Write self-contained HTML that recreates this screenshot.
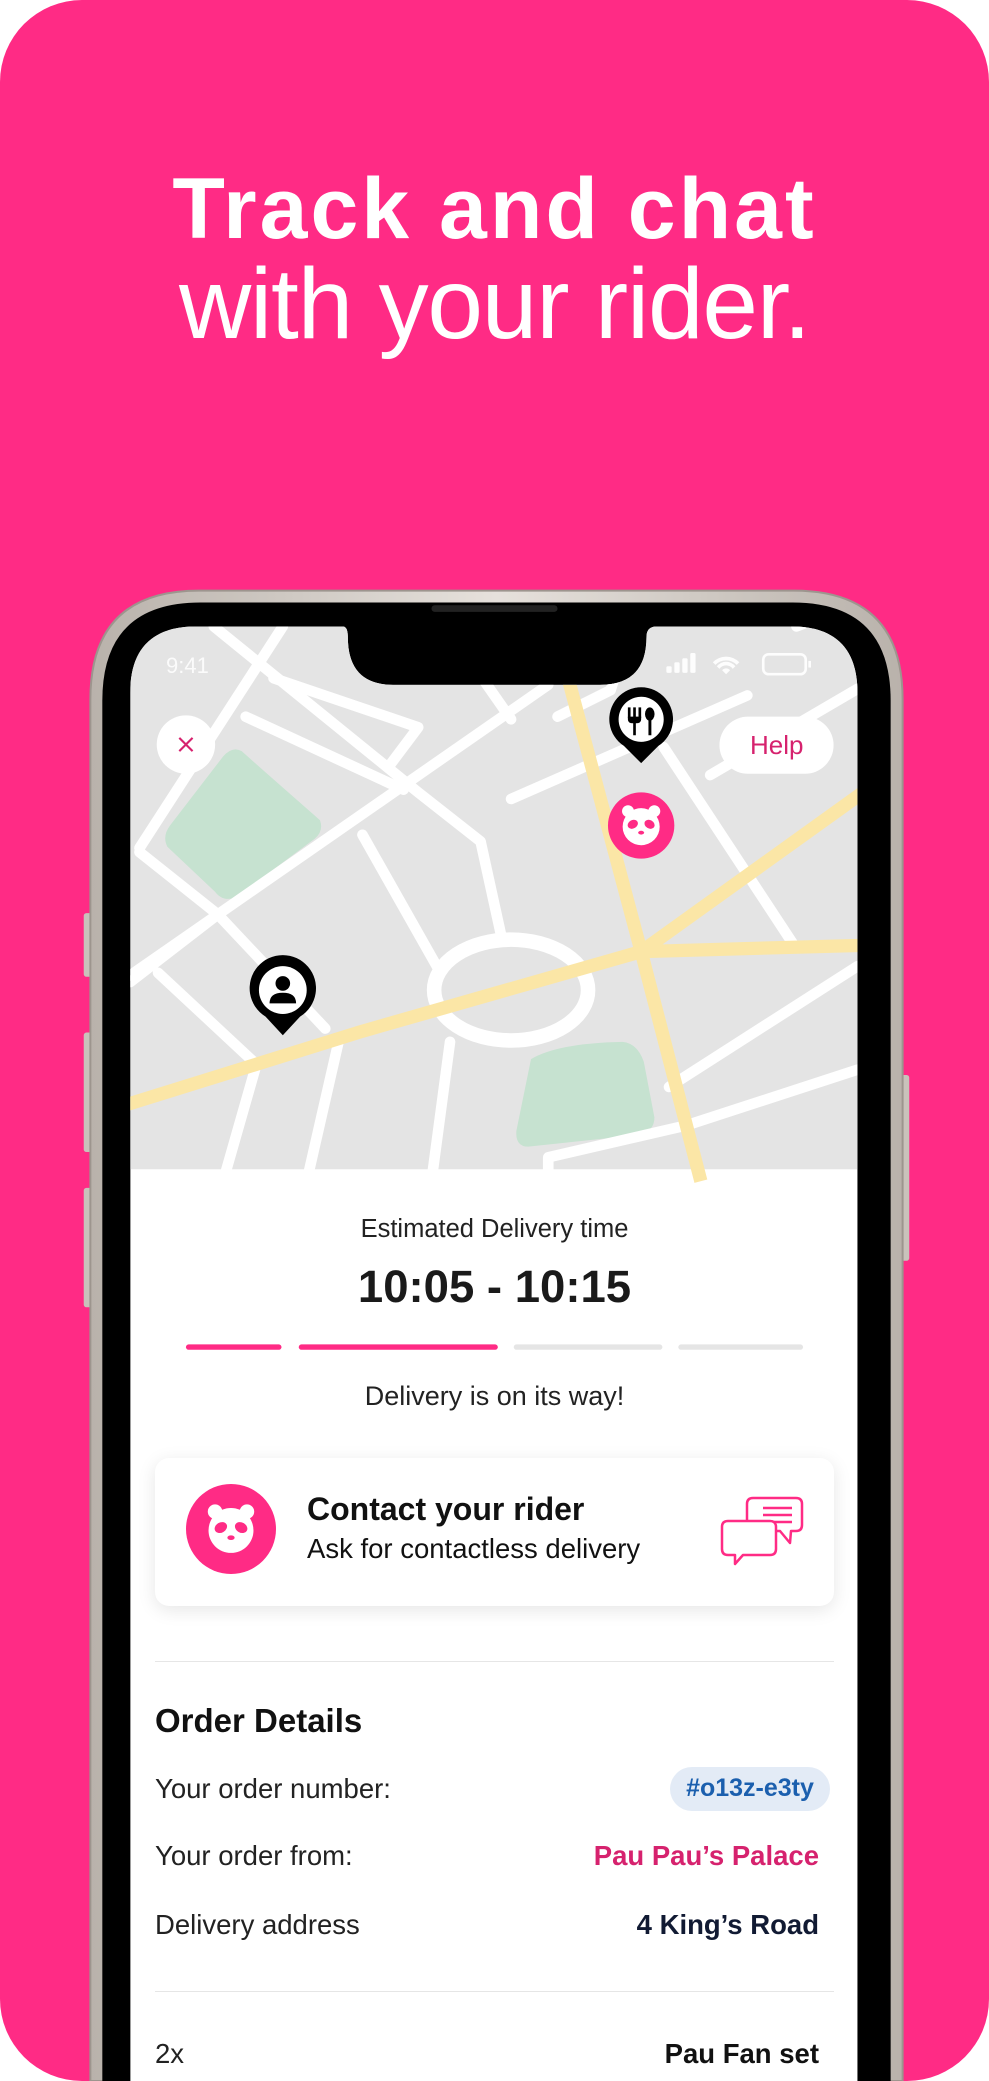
<!DOCTYPE html>
<html><head><meta charset="utf-8">
<style>
*{margin:0;padding:0;box-sizing:border-box}
html,body{width:989px;height:2081px;background:#fff;overflow:hidden}
#wrap{position:absolute;left:0;top:0;width:989px;height:2081px;background:#FF2B85;border-radius:82px;overflow:hidden;font-family:"Liberation Sans",sans-serif}
svg{position:absolute;left:0;top:0}
.t{position:absolute;white-space:nowrap}
</style></head><body>
<div id="wrap">
<div class="t" style="left:0;width:989px;text-align:center;top:159px;font-size:86px;font-weight:700;color:#fff;letter-spacing:3px;line-height:100px">Track and chat</div>
<div class="t" style="left:0;width:989px;text-align:center;top:254px;font-size:100px;font-weight:400;color:#fff;letter-spacing:-1.2px;line-height:100px">with your rider.</div>

<svg width="989" height="2081" viewBox="0 0 745 1568">
<defs>
<clipPath id="scr"><path d="M98,1568 V522 Q98,472 148,472 H258 Q262,472 262,480 Q262,516 296,516 H452 Q487,516 487,480 Q487,472 495,472 H596 Q646,472 646,522 V1568 Z"/></clipPath>
<linearGradient id="fr" x1="0" x2="1"><stop offset="0" stop-color="#b9b2ab"/><stop offset="0.5" stop-color="#e6e1dc"/><stop offset="1" stop-color="#b9b2ab"/></linearGradient>
</defs>
<rect x="63" y="688" width="8" height="48" rx="2" fill="#c9c2bb"/>
<rect x="63" y="778" width="8" height="90" rx="2" fill="#c9c2bb"/>
<rect x="63" y="895" width="8" height="90" rx="2" fill="#c9c2bb"/>
<rect x="677" y="810" width="8" height="140" rx="2" fill="#c9c2bb"/>
<path d="M68,1568 V527 Q68,445 150,445 H598 Q680,445 680,527 V1568 Z" fill="url(#fr)" stroke="#9d958e" stroke-width="1.5"/>
<path d="M77,1568 V528 Q77,454 151,454 H597 Q671,454 671,528 V1568 Z" fill="#000"/>
<rect x="325" y="456" width="95" height="5" rx="2.5" fill="#222"/>
<g clip-path="url(#scr)">
<rect x="98" y="472" width="548" height="1096" fill="#fff"/>
<rect x="98" y="472" width="548" height="409" fill="#e4e4e4"/>
<path d="M182,566 Q192,575 241,618 Q244,626 237,632 L178,676 Q168,680 162,672 L126,638 Q122,630 128,622 L168,570 Q175,562 182,566Z" fill="#c6e2d0"/>
<path d="M400,798 Q420,786 469,785 Q480,786 485,800 L493,842 Q493,852 482,855 L398,864 Q388,864 389,852 Z" fill="#c6e2d0"/>
<g stroke="#fff" stroke-width="8" fill="none" stroke-linecap="round" stroke-linejoin="round">
<path d="M98,735 L413,516"/>
<path d="M105,639 L213,472"/>
<path d="M161,472 L315,597 L362,634 L378,707"/>
<path d="M185,540 L304,595"/>
<path d="M206,511 L315,548 L294,576"/>
<path d="M105,642 L164,689 L245,775"/>
<path d="M164,689 L98,740"/>
<path d="M119,733 L192,801"/>
<path d="M273,629 L329,728"/>
<path d="M192,806 L168,890"/>
<path d="M255,785 L231,890"/>
<path d="M339,785 L325,890"/>
<path d="M563,524 L385,602"/>
<path d="M500,563 L598,712"/>
<path d="M535,584 L646,519"/>
<path d="M504,819 L646,728"/>
<path d="M336,472 L385,542"/>
<path d="M413,881 L413,872 L517,848 L646,806"/>
<path d="M420,540 L460,520 L475,472"/>
<path d="M600,472 L646,455"/>
</g>
<ellipse cx="385" cy="746" rx="58" ry="38" fill="none" stroke="#fff" stroke-width="11"/>
<g stroke="#fbe6a6" stroke-width="10" fill="none" stroke-linejoin="round">
<path d="M90,834 L273,777 L483,717 L660,712"/>
<path d="M425,500 L483,717 L528,890"/>
<path d="M483,717 L660,590"/>
</g>
<path d="M483,575 L470,562 A24,24 0 1 1 496,562 Z" fill="#000"/>
<circle cx="483" cy="542" r="17" fill="#fff"/>
<g fill="#000"><rect x="473" y="533" width="2" height="8"/><rect x="477" y="533" width="2" height="8"/><rect x="481" y="533" width="2" height="8"/><path d="M473,540 h10 v2 q0,3 -4,3 v9 h-2 v-9 q-4,0 -4,-3z"/><ellipse cx="489.5" cy="538" rx="3.6" ry="5"/><rect x="488.5" y="541" width="2.2" height="13"/></g>
<circle cx="483" cy="622" r="25" fill="#ff2b85"/>
<g transform="translate(483,622) scale(0.9)">
<circle cx="-11" cy="-12" r="5" fill="#fff"/><circle cx="11" cy="-12" r="5" fill="#fff"/>
<circle cx="0" cy="1" r="15.5" fill="#fff"/>
<ellipse cx="-7" cy="-1" rx="4.5" ry="3.5" fill="#ff2b85" transform="rotate(-30 -7 -1)"/>
<ellipse cx="7" cy="-1" rx="4.5" ry="3.5" fill="#ff2b85" transform="rotate(30 7 -1)"/>
<ellipse cx="0" cy="6" rx="2.5" ry="1.6" fill="#ff2b85"/>
</g>
<path d="M213,780 L200,766 A25,25 0 1 1 226,766 Z" fill="#000"/>
<circle cx="213" cy="746" r="18" fill="#fff"/>
<circle cx="213" cy="741" r="5.5" fill="#000"/>
<path d="M203,756 q0,-8 10,-8 q10,0 10,8z" fill="#000"/>
<circle cx="140" cy="561" r="22" fill="#fff"/>
<path d="M135,556 L145,566 M145,556 L135,566" stroke="#d6226e" stroke-width="1.6"/>
<rect x="542" y="540" width="86" height="43" rx="21.5" fill="#fff"/>
<g fill="#fff" opacity="0.9">
<rect x="502" y="502" width="4" height="5" rx="1"/><rect x="508" y="499" width="4" height="8" rx="1"/><rect x="514" y="496" width="4" height="11" rx="1"/><rect x="520" y="492" width="4" height="15" rx="1"/>
<path d="M537,499 a14,14 0 0 1 20,0 l-2,2 a11,11 0 0 0 -16,0z M540,502 a9,9 0 0 1 14,0 l-2,2 a6,6 0 0 0 -10,0z M544,505 a4,4 0 0 1 6,0 l-3,3z"/>
<rect x="575" y="493" width="32" height="15" rx="4" fill="none" stroke="#fff" stroke-width="2"/>
<rect x="609" y="498" width="2" height="5"/>
</g>
<g stroke-width="4" stroke-linecap="round">
<line x1="142" y1="1015" x2="210" y2="1015" stroke="#ff2b85"/>
<line x1="227" y1="1015" x2="373" y2="1015" stroke="#ff2b85"/>
<line x1="389" y1="1015" x2="497" y2="1015" stroke="#e5e5e5"/>
<line x1="513" y1="1015" x2="603" y2="1015" stroke="#e5e5e5"/>
</g>
</g>
</svg>

<div class="t" style="left:166px;top:653px;font-size:22px;color:rgba(255,255,255,0.85)">9:41</div>
<div class="t" style="left:750px;top:730px;font-size:26px;color:#d6226e">Help</div>

<div class="t" style="left:0;width:989px;text-align:center;top:1215px;font-size:25.5px;color:#222">Estimated Delivery time</div>
<div class="t" style="left:0;width:989px;text-align:center;top:1261px;font-size:45.5px;font-weight:700;color:#1a1a1a">10:05 - 10:15</div>
<div class="t" style="left:0;width:989px;text-align:center;top:1381px;font-size:27px;color:#222">Delivery is on its way!</div>

<div style="position:absolute;left:155px;top:1458px;width:679px;height:148px;background:#fff;border-radius:14px;box-shadow:0 4px 18px rgba(0,0,0,0.10)">
<svg width="679" height="148" viewBox="0 0 679 148" style="position:absolute;left:0;top:0">
<circle cx="76" cy="71" r="45" fill="#ff2b85"/>
<g transform="translate(76,71) scale(1.45)">
<circle cx="-11" cy="-12" r="5" fill="#fff"/><circle cx="11" cy="-12" r="5" fill="#fff"/>
<circle cx="0" cy="1" r="15.5" fill="#fff"/>
<ellipse cx="-7" cy="-1" rx="4.5" ry="3.5" fill="#ff2b85" transform="rotate(-30 -7 -1)"/>
<ellipse cx="7" cy="-1" rx="4.5" ry="3.5" fill="#ff2b85" transform="rotate(30 7 -1)"/>
<ellipse cx="0" cy="6" rx="2.5" ry="1.6" fill="#ff2b85"/>
</g>
<g fill="none" stroke="#ff2b85" stroke-width="2.5" stroke-linejoin="round">
<path d="M592,70 V46 Q592,40 598,40 H641 Q647,40 647,46 V67 Q647,73 641,73 H636 L635,85 L625,73 H621"/>
<path d="M608,50 H637 M608,57 H637 M608,64 H637"/>
<path d="M573,63 H615 Q621,63 621,69 V91 Q621,97 615,97 H588 L580,106 L580,97 H573 Q567,97 567,91 V69 Q567,63 573,63Z" fill="#fff"/>
</g>
</svg>
<div class="t" style="left:152px;top:33px;font-size:32px;font-weight:700;color:#111">Contact your rider</div>
<div class="t" style="left:152px;top:75px;font-size:27.5px;color:#111">Ask for contactless delivery</div>
</div>

<div style="position:absolute;left:155px;top:1661px;width:679px;height:1px;background:#e6e6e6"></div>
<div class="t" style="left:155px;top:1702px;font-size:33px;font-weight:700;color:#111">Order Details</div>
<div class="t" style="left:155px;top:1773px;font-size:27.5px;color:#222">Your order number:</div>
<div style="position:absolute;left:670px;top:1767px;width:160px;height:44px;border-radius:22px;background:#e3ebf6"></div>
<div class="t" style="left:670px;width:160px;text-align:center;top:1774px;font-size:25px;font-weight:700;color:#1b5fae">#o13z-e3ty</div>
<div class="t" style="left:155px;top:1840px;font-size:27.5px;color:#222">Your order from:</div>
<div class="t" style="right:170px;top:1840px;font-size:27.5px;font-weight:700;color:#d6226e">Pau Pau’s Palace</div>
<div class="t" style="left:155px;top:1909px;font-size:27.5px;color:#222">Delivery address</div>
<div class="t" style="right:170px;top:1909px;font-size:27.5px;font-weight:700;color:#111a33">4 King’s Road</div>
<div style="position:absolute;left:155px;top:1991px;width:679px;height:1px;background:#e6e6e6"></div>
<div class="t" style="left:155px;top:2038px;font-size:27.5px;color:#222">2x</div>
<div class="t" style="right:170px;top:2038px;font-size:27.5px;font-weight:700;color:#111">Pau Fan set</div>
</div>
</body></html>
